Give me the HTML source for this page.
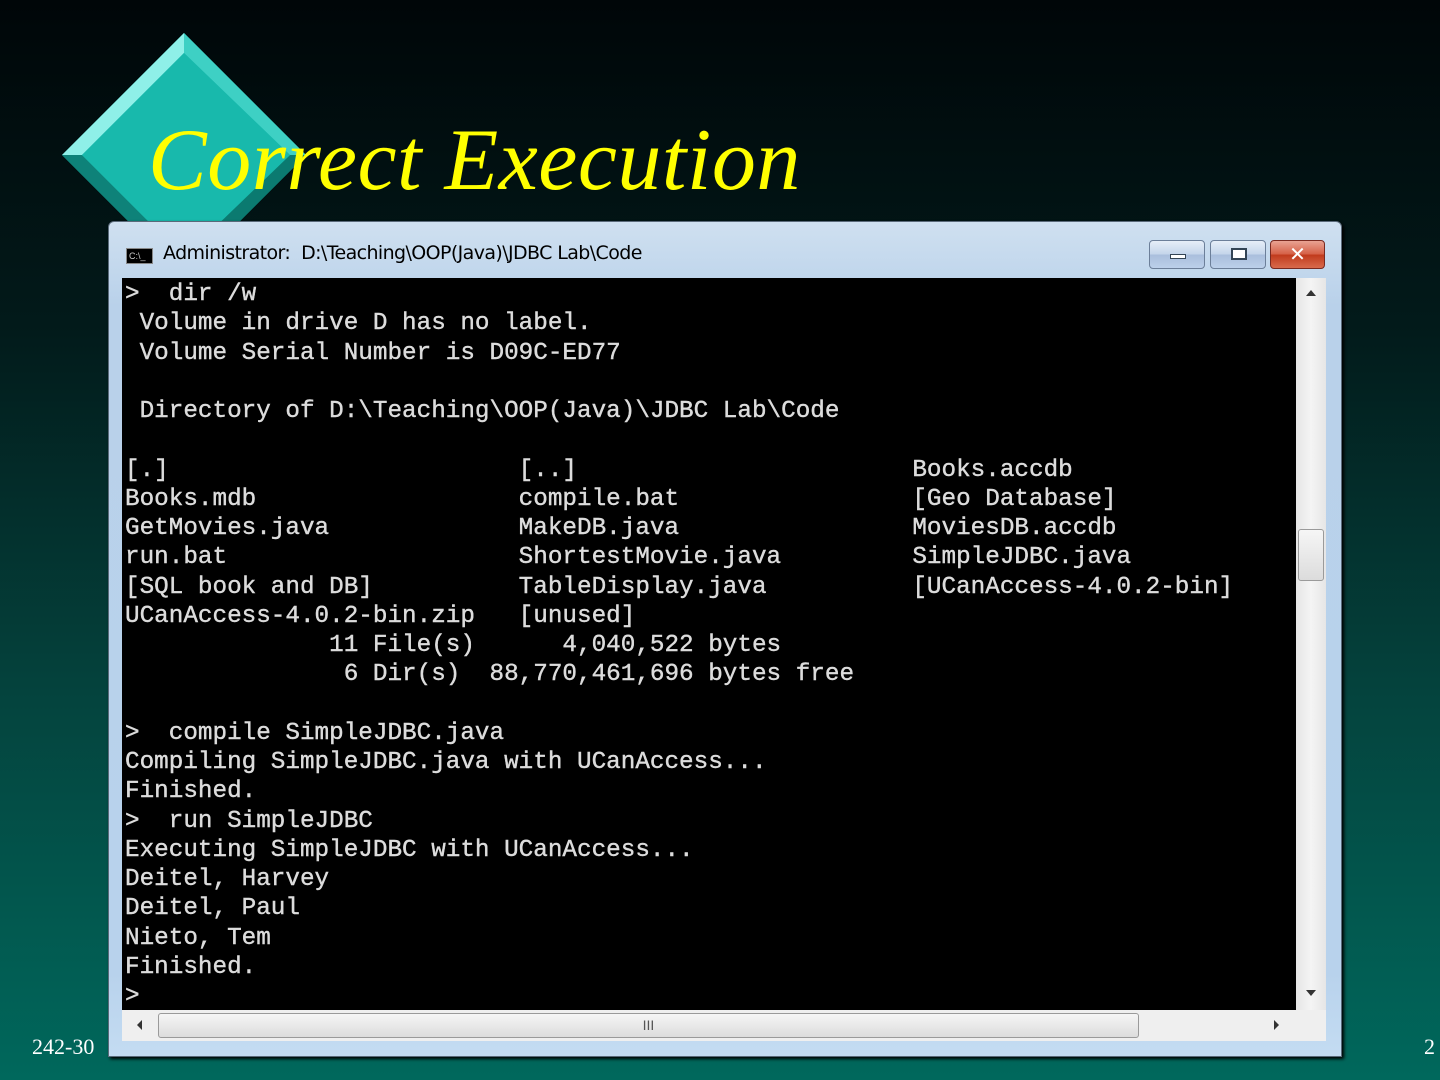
<!DOCTYPE html>
<html><head><meta charset="utf-8"><style>
*{margin:0;padding:0;box-sizing:border-box}
body{width:1440px;height:1080px;overflow:hidden;position:relative;background:linear-gradient(to bottom,#000608 0%,#021a1a 30%,#04443e 65%,#00685c 100%);font-family:"Liberation Serif",serif}
.t{position:absolute;left:148px;top:110px;font-size:88px;font-style:italic;color:#ffff00;white-space:nowrap;z-index:2;letter-spacing:0.5px}
.win{position:absolute;left:108px;top:221px;width:1234px;height:836px;background:linear-gradient(to bottom,#cfe0f0,#b9d1ea 10%,#b8d2ec 90%,#c4dcf2);border:1px solid #5a6a7a;border-radius:6px 6px 0 0;box-shadow:2px 2px 3px #000;z-index:3}
.tt{position:absolute;left:54px;top:20px;font-family:"DejaVu Sans","Liberation Sans",sans-serif;font-size:19px;color:#000;letter-spacing:-0.6px}
.ico{position:absolute;left:17px;top:26px;width:27px;height:16px;background:#000;border:1px solid #888;color:#ccc;font:9px "Liberation Sans";line-height:14px;padding-left:2px}
.btn{position:absolute;top:18px;height:29px;border:1px solid #6c7f99;border-radius:4px;background:linear-gradient(#e6eef8,#c3d4ea 50%,#a9bedc 51%,#bcd0ea)}
.con{position:absolute;left:122px;top:278px;width:1174px;height:732px;background:#000;overflow:hidden;z-index:4}
pre{position:absolute;left:3px;top:2px;font-family:"Liberation Mono",monospace;font-size:24.3px;line-height:29.25px;color:#dcdcdc;white-space:pre;-webkit-text-stroke:0.4px #dcdcdc}
.vs{position:absolute;left:1296px;top:278px;width:30px;height:732px;background:linear-gradient(to right,#e6e6e6,#f4f4f4,#e6e6e6);z-index:4}
.hs{position:absolute;left:122px;top:1010px;width:1174px;height:31px;background:#efefef;z-index:4}
.thumb{position:absolute;background:linear-gradient(#f6f6f6,#dcdcdc);border:1px solid #9a9a9a;border-radius:3px}
.corner{position:absolute;left:1296px;top:1010px;width:30px;height:31px;background:#efefef;z-index:4}
.n{position:absolute;top:1034px;font-size:22px;color:#fff;z-index:1}
</style></head><body>
<svg style="position:absolute;left:62px;top:33px;z-index:1" width="244" height="190" viewBox="0 0 244 190">
<polygon points="122,0 244,122 122,244 0,122" fill="#14b3a6"/>
<polygon points="122,0 244,122 228,122 122,20" fill="#3ed0c4"/>
<polygon points="122,0 0,122 20,122 122,20" fill="#8ff0e8"/>
<polygon points="0,122 122,244 122,224 20,122" fill="#0e8279"/>
<polygon points="244,122 122,244 122,224 228,122" fill="#0b7a70"/>
<polygon points="122,20 228,122 122,224 20,122" fill="#18b9ac"/>
</svg>
<div class="t">Correct Execution</div>
<div class="n" style="left:32px">242-30</div>
<div class="n" style="left:1424px">2</div>
<div class="win">
<div class="ico">C:\_</div>
<div class="tt">Administrator:&nbsp; D:\Teaching\OOP(Java)\JDBC Lab\Code</div>
<div class="btn" style="left:1040px;width:56px"><div style="position:absolute;left:20px;top:13px;width:16px;height:5px;background:#fff;border:1px solid #345"></div></div>
<div class="btn" style="left:1101px;width:56px"><div style="position:absolute;left:20px;top:7px;width:16px;height:12px;border:2px solid #345;background:#fff"></div></div>
<div class="btn" style="left:1161px;width:55px;background:linear-gradient(#e9a393,#d55f45 50%,#c03a1c 51%,#d86a4c);border-color:#7a2a20;color:#fff;font:bold 20px 'DejaVu Sans';text-align:center;line-height:27px">✕</div>
</div>
<div class="con"><pre>&gt;  dir /w
 Volume in drive D has no label.
 Volume Serial Number is D09C-ED77

 Directory of D:\Teaching\OOP(Java)\JDBC Lab\Code

[.]                        [..]                       Books.accdb
Books.mdb                  compile.bat                [Geo Database]
GetMovies.java             MakeDB.java                MoviesDB.accdb
run.bat                    ShortestMovie.java         SimpleJDBC.java
[SQL book and DB]          TableDisplay.java          [UCanAccess-4.0.2-bin]
UCanAccess-4.0.2-bin.zip   [unused]
              11 File(s)      4,040,522 bytes
               6 Dir(s)  88,770,461,696 bytes free

&gt;  compile SimpleJDBC.java
Compiling SimpleJDBC.java with UCanAccess...
Finished.
&gt;  run SimpleJDBC
Executing SimpleJDBC with UCanAccess...
Deitel, Harvey
Deitel, Paul
Nieto, Tem
Finished.
&gt;</pre></div>
<div class="vs"><div style="position:absolute;left:10px;top:12px;border:5px solid transparent;border-bottom:6px solid #333;border-top:0"></div>
<div class="thumb" style="left:2px;top:251px;width:26px;height:52px"></div>
<div style="position:absolute;left:10px;top:712px;border:5px solid transparent;border-top:6px solid #333;border-bottom:0"></div></div>
<div class="hs"><div style="position:absolute;left:15px;top:10px;border:5px solid transparent;border-right:5px solid #333;border-left:0"></div>
<div class="thumb" style="left:36px;top:3px;width:981px;height:25px;text-align:center;font:14px 'Liberation Sans';color:#555;line-height:22px">III</div>
<div style="position:absolute;left:1152px;top:10px;border:5px solid transparent;border-left:5px solid #333;border-right:0"></div></div>
<div class="corner"></div>
</body></html>
